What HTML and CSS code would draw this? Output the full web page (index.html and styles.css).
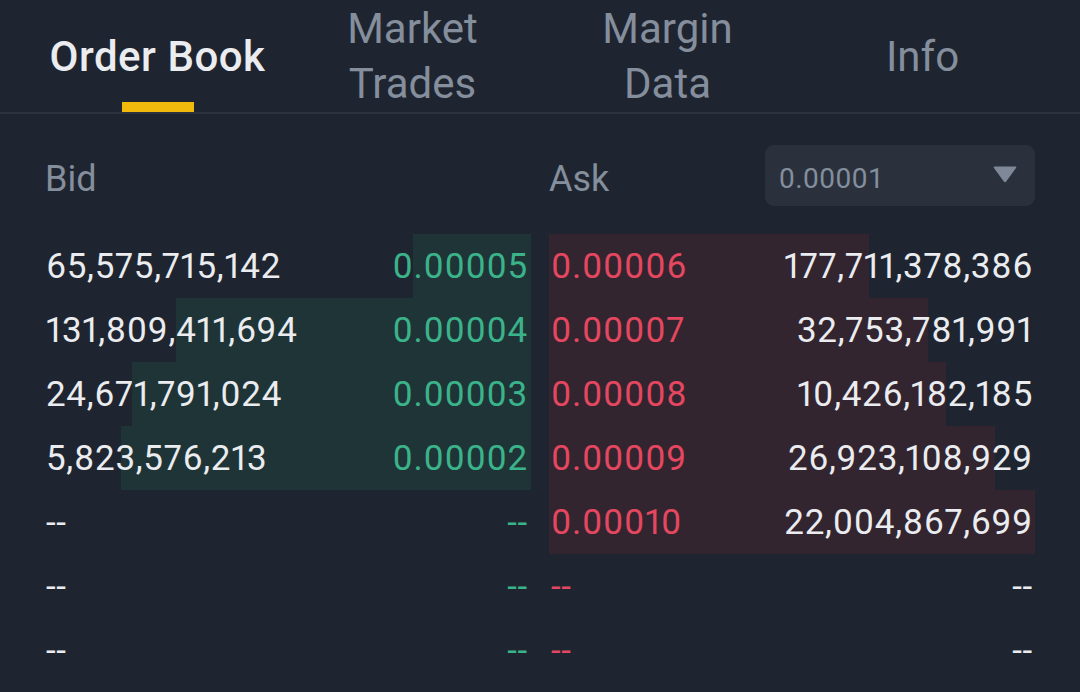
FILE: index.html
```html
<!DOCTYPE html>
<html>
<head>
<meta charset="utf-8">
<link rel="stylesheet" href="styles.css">
</head>
<body>
<nav class="tabs">
  <div class="tab active">Order Book</div>
  <div class="tab">Market<br>Trades</div>
  <div class="tab">Margin<br>Data</div>
  <div class="tab">Info</div>
</nav>
<section class="book">
  <div class="head">
    <div class="head-bid">Bid</div>
    <div class="head-ask">
      <span>Ask</span>
      <div class="select">
        <span>0.00001</span>
        <svg class="caret" width="24" height="17" viewBox="0 0 24 17"><path d="M1.5 0.5 H22.5 Q24 0.5 23 2 L13.2 15.6 Q12 17 10.8 15.6 L1 2 Q0 0.5 1.5 0.5 Z" fill="#7e8898"/></svg>
      </div>
    </div>
  </div>
  <div class="rows">
    <div class="side bid">
      <div class="row"><i class="bar" style="width:24.3%"></i><span class="vol">65,575,715,142</span><span class="px">0.00005</span></div>
      <div class="row"><i class="bar" style="width:73%"></i><span class="vol">131,809,411,694</span><span class="px">0.00004</span></div>
      <div class="row"><i class="bar" style="width:82.1%"></i><span class="vol">24,671,791,024</span><span class="px">0.00003</span></div>
      <div class="row"><i class="bar" style="width:84.4%"></i><span class="vol">5,823,576,213</span><span class="px">0.00002</span></div>
      <div class="row"><span class="vol">--</span><span class="px">--</span></div>
      <div class="row"><span class="vol">--</span><span class="px">--</span></div>
      <div class="row"><span class="vol">--</span><span class="px">--</span></div>
    </div>
    <div class="side ask">
      <div class="row"><i class="bar" style="width:65.8%"></i><span class="px">0.00006</span><span class="vol">177,711,378,386</span></div>
      <div class="row"><i class="bar" style="width:78%"></i><span class="px">0.00007</span><span class="vol">32,753,781,991</span></div>
      <div class="row"><i class="bar" style="width:81.7%"></i><span class="px">0.00008</span><span class="vol">10,426,182,185</span></div>
      <div class="row"><i class="bar" style="width:91.7%"></i><span class="px">0.00009</span><span class="vol">26,923,108,929</span></div>
      <div class="row"><i class="bar" style="width:100%"></i><span class="px">0.00010</span><span class="vol">22,004,867,699</span></div>
      <div class="row"><span class="px">--</span><span class="vol">--</span></div>
      <div class="row"><span class="px">--</span><span class="vol">--</span></div>
    </div>
  </div>
</section>
</body>
</html>
```
FILE: styles.css
```css
* { box-sizing: border-box; }
html, body {
  margin: 0;
  background: #1f2530;
  font-family: Roboto, "Liberation Sans", sans-serif;
  width: 1080px;
  height: 692px;
  overflow: hidden;
}
.tabs {
  display: flex;
  padding: 0 30px;
  height: 114px;
  border-bottom: 2px solid #2c333e;
}
.tab {
  flex: 1;
  display: flex;
  align-items: center;
  justify-content: center;
  text-align: center;
  font-size: 42px;
  line-height: 55px;
  color: #848e9c;
  position: relative;
}
.tab.active {
  color: #eaecef;
  font-weight: 500;
  letter-spacing: 0.5px;
}
.tab.active::after {
  content: "";
  position: absolute;
  bottom: 0;
  left: 50%;
  width: 72px;
  margin-left: -36px;
  height: 10px;
  background: #f0b90b;
}
.book {
  padding: 31px 45px 0;
}
.head {
  display: flex;
  gap: 18px;
  height: 61px;
  align-items: center;
  font-size: 36px;
  color: #848e9c;
}
.head-bid { flex: 1; padding-top: 6px; }
.head-ask {
  flex: 1;
  display: flex;
  align-items: center;
  justify-content: space-between;
}
.head-ask > span { padding-top: 6px; }
.select {
  width: 270px;
  height: 61px;
  background: #2a313c;
  border-radius: 9px;
  display: flex;
  align-items: center;
  justify-content: space-between;
  padding: 0 18px 0 14px;
  font-size: 28px;
  color: #848e9c;
}
.select span { padding-top: 5px; letter-spacing: 0.5px; }
.caret { display: block; margin-top: -2px; }
.rows {
  display: flex;
  gap: 18px;
  margin-top: 28px;
}
.side { flex: 1; }
.row {
  position: relative;
  height: 64px;
  display: flex;
  align-items: center;
  justify-content: space-between;
  font-size: 35px;
  font-variant-numeric: proportional-nums;
  letter-spacing: 0.7px;
}
.row span { position: relative; }
.bar {
  position: absolute;
  top: 0;
  bottom: 0;
}
.bid .row { padding: 0 3px 0 1px; }
.bid .bar { right: 0; background: #1f3437; }
.ask .row { padding: 0 2px 0 2px; }
.ask .bar { left: 0; background: #32252f; }
.vol { color: #eaecef; }
.bid .px { color: #3bb38a; }
.ask .px { color: #e4475f; }
```
